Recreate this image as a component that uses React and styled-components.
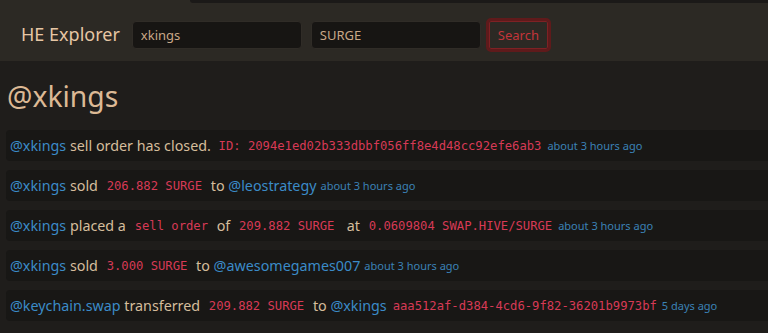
import React from "react";
import styled, { createGlobalStyle } from "styled-components";

const Global = createGlobalStyle`
  html, body { margin: 0; padding: 0; background: #1f1d1b; }
  body { font-family: "Noto Sans", "Open Sans", sans-serif; overflow: hidden; }
`;

const Page = styled.div`
  width: 768px;
  min-height: 333px;
  background: #1f1d1b;
  position: relative;
`;

const TopShadow = styled.div`
  position: absolute;
  top: 0;
  left: 190px;
  right: 0;
  height: 3px;
  background: #1b1918;
  border-bottom-left-radius: 4px;
`;

const Navbar = styled.nav`
  height: 61px;
  background: #2c2924;
  display: flex;
  align-items: center;
  padding: 8px 0 0 21px;
  box-sizing: border-box;
`;

const Brand = styled.div`
  font-size: 18px;
  color: #e6c6a4;
  margin-right: 12px;
  padding-bottom: 1px;
`;

const Input = styled.input`
  width: 170px;
  height: 28px;
  box-sizing: border-box;
  background: #171513;
  border: 1px solid #302c27;
  border-radius: 4px;
  color: #c9a888;
  font-family: inherit;
  font-size: 13px;
  padding: 0 8px;
  margin-right: ${(p) => p.$mr || 0}px;
  outline: none;
`;

const Button = styled.button`
  height: 34px;
  box-sizing: border-box;
  padding: 0 9px;
  background: transparent;
  border: 3px solid #5f1a1b;
  border-radius: 5px;
  color: #c3353a;
  font-family: inherit;
  font-size: 13px;
  box-shadow: inset 0 0 0 1px #7e2124;
`;

const Main = styled.main`
  padding: 0 0 0 6px;
`;

const Heading = styled.h1`
  margin: 0;
  padding: 17px 0 15px 1px;
  font-weight: 400;
  font-size: 28.3px;
  line-height: 37px;
  color: #dcb995;
`;

const List = styled.div`
  display: flex;
  flex-direction: column;
  gap: 9px;
`;

const Row = styled.div`
  height: 31px;
  width: 780px;
  background: #181715;
  border-radius: 4px;
  display: flex;
  align-items: center;
  padding-left: 4px;
  box-sizing: border-box;
  white-space: pre;
  font-size: 14.3px;
  color: #d5bd9c;
`;

const User = styled.span`
  color: #3b8bc8;
`;

const Code = styled.code`
  font-family: "DejaVu Sans Mono", "Liberation Mono", monospace;
  font-size: 12.2px;
  color: #d73a55;
  padding: 0 ${(p) => (p.$pr !== undefined ? p.$pr : 5)}px 0 ${(p) => (p.$pl !== undefined ? p.$pl : 5)}px;
`;

const Time = styled.span`
  color: #3b82b6;
  font-size: 11px;
  margin-left: ${(p) => (p.$ml !== undefined ? p.$ml : 4)}px;
`;

export default function App() {
  return (
    <Page>
      <Global />
      <TopShadow />
      <Navbar>
        <Brand>HE Explorer</Brand>
        <Input defaultValue="xkings" $mr={9} />
        <Input defaultValue="SURGE" $mr={5} />
        <Button>Search</Button>
      </Navbar>
      <Main>
        <Heading>@xkings</Heading>
        <List>
          <Row>
            <User>@xkings</User> sell order has closed. <Code $pl={4} $pr={0}>ID: 2094e1ed02b333dbbf056ff8e4d48cc92efe6ab3</Code>
            <Time $ml={6}>about 3 hours ago</Time>
          </Row>
          <Row>
            <User>@xkings</User> sold <Code>206.882 SURGE</Code> to <User>@leostrategy</User>
            <Time>about 3 hours ago</Time>
          </Row>
          <Row>
            <User>@xkings</User> placed a <Code>sell order</Code> of <Code>209.882 SURGE</Code>  at <Code $pr={0}>0.0609804 SWAP.HIVE/SURGE</Code>
            <Time $ml={6}>about 3 hours ago</Time>
          </Row>
          <Row>
            <User>@xkings</User> sold <Code>3.000 SURGE</Code> to <User>@awesomegames007</User>
            <Time>about 3 hours ago</Time>
          </Row>
          <Row>
            <User>@keychain.swap</User> transferred <Code>209.882 SURGE</Code> to <User>@xkings</User><Code $pl={6} $pr={0}>aaa512af-d384-4cd6-9f82-36201b9973bf</Code>
            <Time $ml={5}>5 days ago</Time>
          </Row>
        </List>
      </Main>
    </Page>
  );
}
